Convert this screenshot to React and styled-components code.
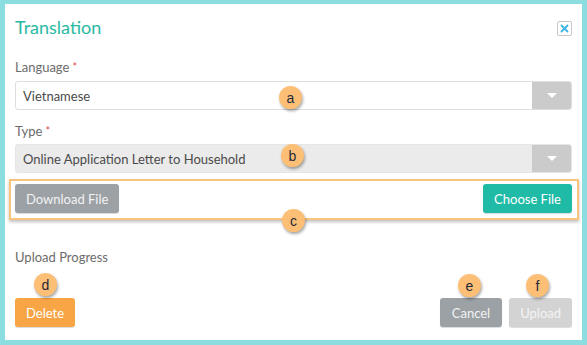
import styled, { createGlobalStyle } from "styled-components";

const Global = createGlobalStyle`
  html, body {
    margin: 0;
    padding: 0;
    background: #8cdde0;
  }
  body {
    font-family: Lato, "Open Sans", sans-serif;
  }
`;

const Panel = styled.div`
  position: relative;
  box-sizing: border-box;
  height: 336px;
  margin: 4px 5px 0 5px;
  padding: 9px 10px 13px 10px;
  background: #fff;
  display: flex;
  flex-direction: column;
`;

const Header = styled.div`
  display: flex;
  justify-content: space-between;
  align-items: center;
  height: 28px;
`;

const Title = styled.h2`
  margin: 0;
  font-size: 18px;
  font-weight: 400;
  color: #2ab9a2;
`;

const Close = styled.button`
  box-sizing: border-box;
  width: 15px;
  height: 15px;
  padding: 0;
  border: 1px solid #c8c8c8;
  border-radius: 2px;
  background: #fff;
  display: flex;
  align-items: center;
  justify-content: center;
  margin-top: 3px;
`;

const Label = styled.div`
  font-size: 13px;
  line-height: 16px;
  color: #6b6b6b;
  margin-top: ${({ top }) => top}px;
  span {
    color: #e4494f;
    margin-left: 3px;
    font-size: 11px;
    vertical-align: top;
  }
`;

const Select = styled.div`
  box-sizing: border-box;
  height: 29px;
  margin-top: ${({ top }) => top}px;
  border: 1px solid ${({ disabled }) => (disabled ? "#e6e6e6" : "#dedede")};
  border-radius: 3px;
  background: ${({ disabled }) => (disabled ? "#ebebeb" : "#fff")};
  display: flex;
  align-items: stretch;
  overflow: hidden;
`;

const Value = styled.div`
  flex: 1;
  display: flex;
  align-items: center;
  padding-left: 7px;
  font-size: 13px;
  color: #4a4a4a;
`;

const Caret = styled.div`
  width: 39px;
  background: #cbcbcb;
  display: flex;
  align-items: center;
  justify-content: center;
  &::after {
    content: "";
    border-left: 5px solid transparent;
    border-right: 5px solid transparent;
    border-top: 5px solid #fff;
  }
`;

const FileBox = styled.div`
  margin: 6px -7px 0 -6px;
  height: 41px;
  box-sizing: border-box;
  border: 2px solid #f8c37e;
  box-shadow: 0 2px 3px rgba(0, 0, 0, 0.25);
  padding: 3px 5px 0 4px;
  display: flex;
  justify-content: space-between;
  align-items: flex-start;
`;

const Button = styled.button`
  box-sizing: border-box;
  height: 29px;
  padding: 0 ${({ pad }) => pad}px;
  border: none;
  border-radius: 3px;
  font-family: Lato, sans-serif;
  font-size: 13px;
  color: ${({ fg }) => fg || "#fff"};
  background: ${({ bg }) => bg};
  box-shadow: 0 1px 1px rgba(0, 0, 0, 0.15);
`;

const Footer = styled.div`
  margin-top: auto;
  display: flex;
  align-items: center;
`;

const Actions = styled.div`
  margin-left: auto;
  display: flex;
  gap: 7px;
`;

const Badge = styled.div`
  position: absolute;
  left: ${({ x }) => x - 11}px;
  top: ${({ y }) => y - 11}px;
  width: 23px;
  height: 23px;
  border-radius: 50%;
  background: #fdbf76;
  box-shadow: 1px 2px 3px rgba(0, 0, 0, 0.35);
  display: flex;
  align-items: center;
  justify-content: center;
  font-family: "Liberation Sans", Arial, sans-serif;
  font-size: 14px;
  color: #1f2a3c;
  line-height: 1;
`;

const badges = [
  { l: "a", x: 285, y: 93 },
  { l: "b", x: 287, y: 151 },
  { l: "c", x: 288, y: 216 },
  { l: "d", x: 40, y: 280 },
  { l: "e", x: 464, y: 281 },
  { l: "f", x: 532, y: 281 },
];

export default function App() {
  return (
    <>
      <Global />
      <Panel>
        <Header>
          <Title>Translation</Title>
          <Close>
            <svg width="9" height="9" viewBox="0 0 9 9">
              <path d="M1 1L8 8M8 1L1 8" stroke="#3db6e4" strokeWidth="1.8" />
            </svg>
          </Close>
        </Header>
        <Label top={18}>
          Language<span>*</span>
        </Label>
        <Select top={6}>
          <Value>Vietnamese</Value>
          <Caret />
        </Select>
        <Label top={13}>
          Type<span>*</span>
        </Label>
        <Select top={5} disabled>
          <Value>Online Application Letter to Household</Value>
          <Caret />
        </Select>
        <FileBox>
          <Button bg="#9ca1a6" fg="#f2f2f2" pad={11}>
            Download File
          </Button>
          <Button bg="#1fbba6" pad={11}>
            Choose File
          </Button>
        </FileBox>
        <Label top={29}>Upload Progress</Label>
        <Footer>
          <Button bg="#f8a545" pad={11}>
            Delete
          </Button>
          <Actions>
            <Button bg="#9ca1a6" fg="#f2f2f2" pad={12}>
              Cancel
            </Button>
            <Button bg="#d3d3d3" fg="#f4f4f4" pad={11}>
              Upload
            </Button>
          </Actions>
        </Footer>
        {badges.map((b) => (
          <Badge key={b.l} x={b.x} y={b.y}>
            {b.l}
          </Badge>
        ))}
      </Panel>
    </>
  );
}
